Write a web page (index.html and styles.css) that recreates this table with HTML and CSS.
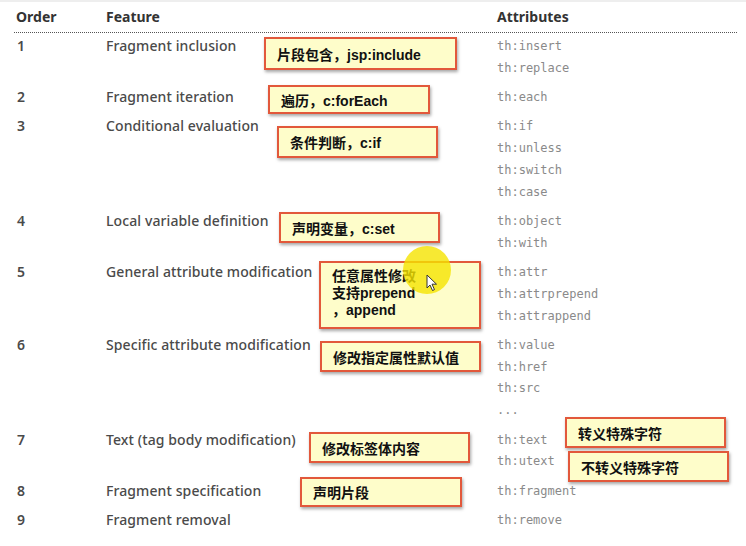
FILE: index.html
```html
<!DOCTYPE html>
<html lang="zh">
<head>
  <meta charset="UTF-8">
  <title>Thymeleaf 属性优先级</title>
  <link rel="stylesheet" href="styles.css">
</head>
<body>
  <div class="sheet">
    <!-- 表头 -->
    <div class="row head">
      <div>Order</div>
      <div>Feature</div>
      <div>Attributes</div>
    </div>
    <div class="rule"></div>

    <div class="row">
      <div class="ord">1</div>
      <div class="feat">Fragment inclusion</div>
      <div class="attrs"><div>th:insert</div><div>th:replace</div></div>
    </div>
    <div class="row">
      <div class="ord">2</div>
      <div class="feat">Fragment iteration</div>
      <div class="attrs"><div>th:each</div></div>
    </div>
    <div class="row">
      <div class="ord">3</div>
      <div class="feat">Conditional evaluation</div>
      <div class="attrs"><div>th:if</div><div>th:unless</div><div>th:switch</div><div>th:case</div></div>
    </div>
    <div class="row">
      <div class="ord">4</div>
      <div class="feat">Local variable definition</div>
      <div class="attrs"><div>th:object</div><div>th:with</div></div>
    </div>
    <div class="row">
      <div class="ord">5</div>
      <div class="feat">General attribute modification</div>
      <div class="attrs"><div>th:attr</div><div>th:attrprepend</div><div>th:attrappend</div></div>
    </div>
    <div class="row">
      <div class="ord">6</div>
      <div class="feat">Specific attribute modification</div>
      <div class="attrs"><div>th:value</div><div>th:href</div><div>th:src</div><div>...</div></div>
    </div>
    <div class="row">
      <div class="ord">7</div>
      <div class="feat">Text (tag body modification)</div>
      <div class="attrs"><div>th:text</div><div>th:utext</div></div>
    </div>
    <div class="row">
      <div class="ord">8</div>
      <div class="feat">Fragment specification</div>
      <div class="attrs"><div>th:fragment</div></div>
    </div>
    <div class="row">
      <div class="ord">9</div>
      <div class="feat">Fragment removal</div>
      <div class="attrs"><div>th:remove</div></div>
    </div>

    <!-- 批注框 -->
    <div class="note n1">片段包含，jsp:include</div>
    <div class="note n2">遍历，c:forEach</div>
    <div class="note n3">条件判断，c:if</div>
    <div class="note n4">声明变量，c:set</div>
    <div class="note n5">任意属性修改<br>支持prepend<br>，append</div>
    <div class="note n6">修改指定属性默认值</div>
    <div class="note n7">修改标签体内容</div>
    <div class="note n8">声明片段</div>
    <div class="note n9">转义特殊字符</div>
    <div class="note n10">不转义特殊字符</div>

    <!-- 鼠标高亮 -->
    <div class="spot"></div>
    <svg class="cursor" width="12" height="18" viewBox="0 0 12 18">
      <path d="M1 1 L1 14 L4 11 L6.5 16.5 L8.5 15.6 L6 10.2 L10.5 10.2 Z" fill="#fff" stroke="#333" stroke-width="1"/>
    </svg>
  </div>
</body>
</html>
```

FILE: styles.css
```css
* {
  box-sizing: border-box;
}
body {
  margin: 0;
  background: #fff;
  font-family: "Noto Sans", "Noto Sans CJK SC", sans-serif;
}
.sheet {
  position: relative;
  width: 746px;
  height: 546px;
  padding: 4px 9px 0 16px;
  overflow: hidden;
  border-top: 2px solid #eee;
}
.row {
  display: grid;
  grid-template-columns: 90px 391px 1fr;
  line-height: 21.8px;
  padding-bottom: 7.5px;
  font-size: 14px;
  font-weight: 500;
  letter-spacing: 0.1px;
  color: #4a4a4a;
}
.head {
  padding-bottom: 0;
  font-size: 14px;
  font-weight: 700;
  letter-spacing: 0;
  color: #333;
}
.rule {
  height: 0;
  margin: 4px 0 2px -2px;
  border-top: 1px dotted #555;
}
.ord {
  padding-left: 1px;
  font-weight: 600;
}
/* 等寬屬性欄，略往下移一點但不改變列高 */
.attrs {
  padding-top: 1px;
  margin-bottom: -1px;
  font-family: "DejaVu Sans Mono", monospace;
  font-size: 12px;
  font-weight: 400;
  letter-spacing: 0;
  color: #8a8a8a;
}
/* 批注框 */
.note {
  position: absolute;
  display: flex;
  align-items: center;
  padding: 0 11px;
  background: #fefdca;
  border: 2px solid #e2583b;
  box-shadow: 1px 2px 3px rgba(0,0,0,0.35);
  font-family: "Liberation Sans", "Noto Sans CJK SC", sans-serif;
  font-size: 14px;
  font-weight: 700;
  color: #111;
}
.n1 { left: 264px; top: 35px; width: 193px; height: 33px; }
.n2 { left: 268px; top: 83px; width: 162px; height: 29px; }
.n3 { left: 277px; top: 124px; width: 161px; height: 32px; }
.n4 { left: 279px; top: 210px; width: 161px; height: 31px; }
.n5 {
  left: 319px; top: 259px; width: 162px; height: 68px;
  align-items: flex-start;
  padding-top: 5px;
  line-height: 17px;
}
.n6 { left: 320px; top: 339px; width: 161px; height: 31px; }
.n7 { left: 309px; top: 430px; width: 161px; height: 31px; }
.n8 { left: 300px; top: 475px; width: 162px; height: 30px; }
.n9 { left: 565px; top: 415px; width: 161px; height: 31px; }
.n10 { left: 568px; top: 449px; width: 161px; height: 31px; }
.spot {
  position: absolute;
  left: 403px;
  top: 244px;
  width: 48px;
  height: 48px;
  border-radius: 50%;
  background: rgba(245, 228, 0, 0.8);
}
.cursor {
  position: absolute;
  left: 426px;
  top: 272px;
}
```
